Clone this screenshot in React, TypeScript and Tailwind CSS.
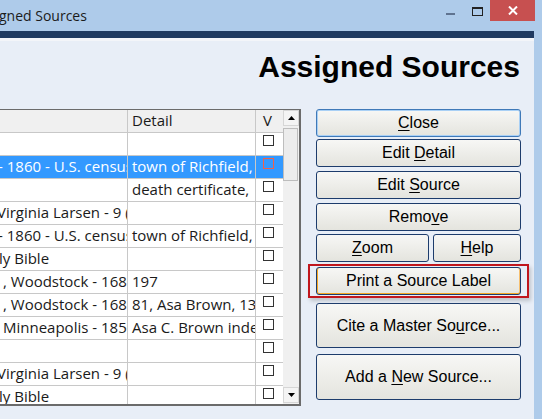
import React from "react";

type Row = {
  name: string;
  detail: string;
  nameOffset?: string;
  selected?: boolean;
};

const rows: Row[] = [
  { name: "", detail: "" },
  { name: "- 1860 - U.S. census", detail: "town of Richfield,", nameOffset: "-ml-[2px]", selected: true },
  { name: "", detail: "death certificate," },
  { name: "Virginia Larsen - 9 (", detail: "", nameOffset: "-ml-[3px]" },
  { name: "- 1860 - U.S. census", detail: "town of Richfield,", nameOffset: "-ml-[2px]" },
  { name: "ly Bible", detail: "", nameOffset: "-ml-[1px]" },
  { name: ", Woodstock - 1680", detail: "197", nameOffset: "ml-[3px]" },
  { name: ", Woodstock - 1680", detail: "81, Asa Brown, 13", nameOffset: "ml-[3px]" },
  { name: "Minneapolis - 1850", detail: "Asa C. Brown index", nameOffset: "ml-[3px]" },
  { name: "", detail: "" },
  { name: "Virginia Larsen - 9 (", detail: "", nameOffset: "-ml-[3px]" },
  { name: "ly Bible", detail: "", nameOffset: "-ml-[1px]" },
];

const Key = ({ children }: { children: React.ReactNode }) => (
  <span className="underline underline-offset-[2px] decoration-[1px]">{children}</span>
);

const Btn = ({
  children,
  className = "",
  variant = "plain",
}: {
  children: React.ReactNode;
  className?: string;
  variant?: "plain" | "default" | "hot";
}) => {
  const skin =
    variant === "default"
      ? "border-[#3f79b8] shadow-[inset_0_0_0_1px_#a9d0f5]"
      : variant === "hot"
        ? "border-[#1d3c6c] shadow-[inset_1px_0_0_0_#f6a623,inset_0_-1px_0_0_#f6a623,inset_-1px_0_0_0_#f6c070]"
        : "border-[#1d3c6c]";
  return (
    <div
      className={`flex items-center justify-center rounded-[3px] border bg-gradient-to-b from-[#f7f7f5] to-[#e4e4de] text-[16px] leading-none text-black ${skin} ${className}`}
    >
      {children}
    </div>
  );
};

const Check = ({ hot }: { hot?: boolean }) => (
  <div
    className={`mt-[2px] ml-[7px] h-[11px] w-[11px] border ${hot ? "border-[#f0604a]" : "border-[#333] bg-white"}`}
  />
);

export default function App() {
  return (
    <div className="w-[542px] h-[419px] overflow-hidden bg-[#aecbea] font-['Liberation_Sans',Arial,sans-serif] flex flex-col">
      {/* title bar */}
      <div className="h-[31px] flex items-start shrink-0">
        <div className="mt-[6px] -ml-[1px] text-[14px] text-[#1b1b1b] font-['Open_Sans',sans-serif] leading-[20px]">
          gned Sources
        </div>
        <div className="ml-auto flex items-start mr-[7px]">
          <div className="mt-[13px] h-[2px] w-[9px] bg-[#5f7390] mr-[17px]" />
          <div className="mt-[7px] h-[9px] w-[11px] border border-t-2 border-[#222] mr-[7px]" />
          <div className="h-[21px] w-[45px] bg-[#c75050] flex items-center justify-center">
            <svg width="10" height="9" viewBox="0 0 10 9">
              <path d="M1 0.5 L9 8.5 M9 0.5 L1 8.5" stroke="#fff" strokeWidth="2" />
            </svg>
          </div>
        </div>
      </div>

      <div className="flex flex-1 min-h-0">
        <div className="w-[534px] flex flex-col">
          <div className="h-[7px] bg-[#1f3a61] shrink-0" />
          <div className="h-[3px] bg-[#f3f5f9] shrink-0" />
          <div className="flex-1 bg-[#e8eef7] flex flex-col">
            <div className="h-[68px] flex justify-end items-start pr-[14px]">
              <h1 className="mt-[9px] text-[30px] font-bold leading-[34px] text-black">Assigned Sources</h1>
            </div>

            <div className="flex items-start">
              {/* source list */}
              <div className="w-[301px] h-[297px] border-t border-b-2 border-r-2 border-[#6b6b6b] bg-white flex overflow-hidden font-['Open_Sans',sans-serif] text-[15px] text-[#1a1a1a]">
                <div className="w-[283px] flex flex-col">
                  <div className="h-[23px] shrink-0 flex bg-[#f0f0f0] border-b border-[#c8c8c8] leading-[21px]">
                    <div className="w-[128px] border-r border-[#c8c8c8]" />
                    <div className="w-[128px] border-r border-[#c8c8c8] pl-[4px]">Detail</div>
                    <div className="flex-1 pl-[7px]">V</div>
                  </div>
                  {rows.map((r, i) => (
                    <div
                      key={i}
                      className={`h-[23px] shrink-0 flex border-b border-[#c8c8c8] leading-[21px] ${r.selected ? "bg-[#3399ff] text-white" : ""}`}
                    >
                      <div className="w-[128px] border-r border-[#c8c8c8] overflow-hidden whitespace-nowrap">
                        <div className={r.nameOffset ?? ""}>{r.name}</div>
                      </div>
                      <div className="w-[128px] border-r border-[#c8c8c8] overflow-hidden whitespace-nowrap pl-[4px]">
                        {r.detail}
                      </div>
                      <div className="flex-1">
                        <Check hot={r.selected} />
                      </div>
                    </div>
                  ))}
                </div>
                {/* vertical scrollbar */}
                <div className="w-[16px] bg-[#f0f0f0] flex flex-col">
                  <div className="h-[16px] w-[16px] border border-[#d6d6d6] bg-[#f4f4f4] flex items-center justify-center shrink-0">
                    <svg width="7" height="4" viewBox="0 0 7 4">
                      <path d="M3.5 0 L7 4 L0 4 Z" fill="#000" />
                    </svg>
                  </div>
                  <div className="mt-[2px] h-[53px] w-[15px] border border-[#bdbdbd] bg-[#ececec]" />
                  <div className="mt-auto mb-[1px] h-[16px] w-[16px] border border-[#d6d6d6] bg-[#f4f4f4] flex items-center justify-center shrink-0">
                    <svg width="7" height="4" viewBox="0 0 7 4">
                      <path d="M0 0 L7 0 L3.5 4 Z" fill="#000" />
                    </svg>
                  </div>
                </div>
              </div>

              {/* command buttons */}
              <div className="ml-[15px] w-[205px] flex flex-col">
                <Btn variant="default" className="h-[28px]">
                  <Key>C</Key>lose
                </Btn>
                <Btn className="h-[28px] mt-[2px]">
                  Edit&nbsp;<Key>D</Key>etail
                </Btn>
                <Btn className="h-[28px] mt-[4px]">
                  Edit&nbsp;<Key>S</Key>ource
                </Btn>
                <Btn className="h-[28px] mt-[4px]">
                  Remo<Key>v</Key>e
                </Btn>
                <div className="flex gap-[4px] mt-[3px]">
                  <Btn className="h-[28px] w-[113px]">
                    <Key>Z</Key>oom
                  </Btn>
                  <Btn className="h-[28px] flex-1">
                    <Key>H</Key>elp
                  </Btn>
                </div>
                <div className="mt-[2px] -mx-[8px] p-[1px] border-2 border-[#c0161d] shadow-[2px_3px_4px_rgba(0,0,0,0.18)]">
                  <Btn variant="hot" className="h-[28px] mx-[5px]">
                    Print a Source Label
                  </Btn>
                </div>
                <Btn className="h-[45px] mt-[5px]">
                  Cite a Master So<Key>u</Key>rce...
                </Btn>
                <Btn className="h-[46px] mt-[6px]">
                  Add a&nbsp;<Key>N</Key>ew Source...
                </Btn>
              </div>
            </div>
          </div>
        </div>
        <div className="flex-1" />
      </div>
    </div>
  );
}
